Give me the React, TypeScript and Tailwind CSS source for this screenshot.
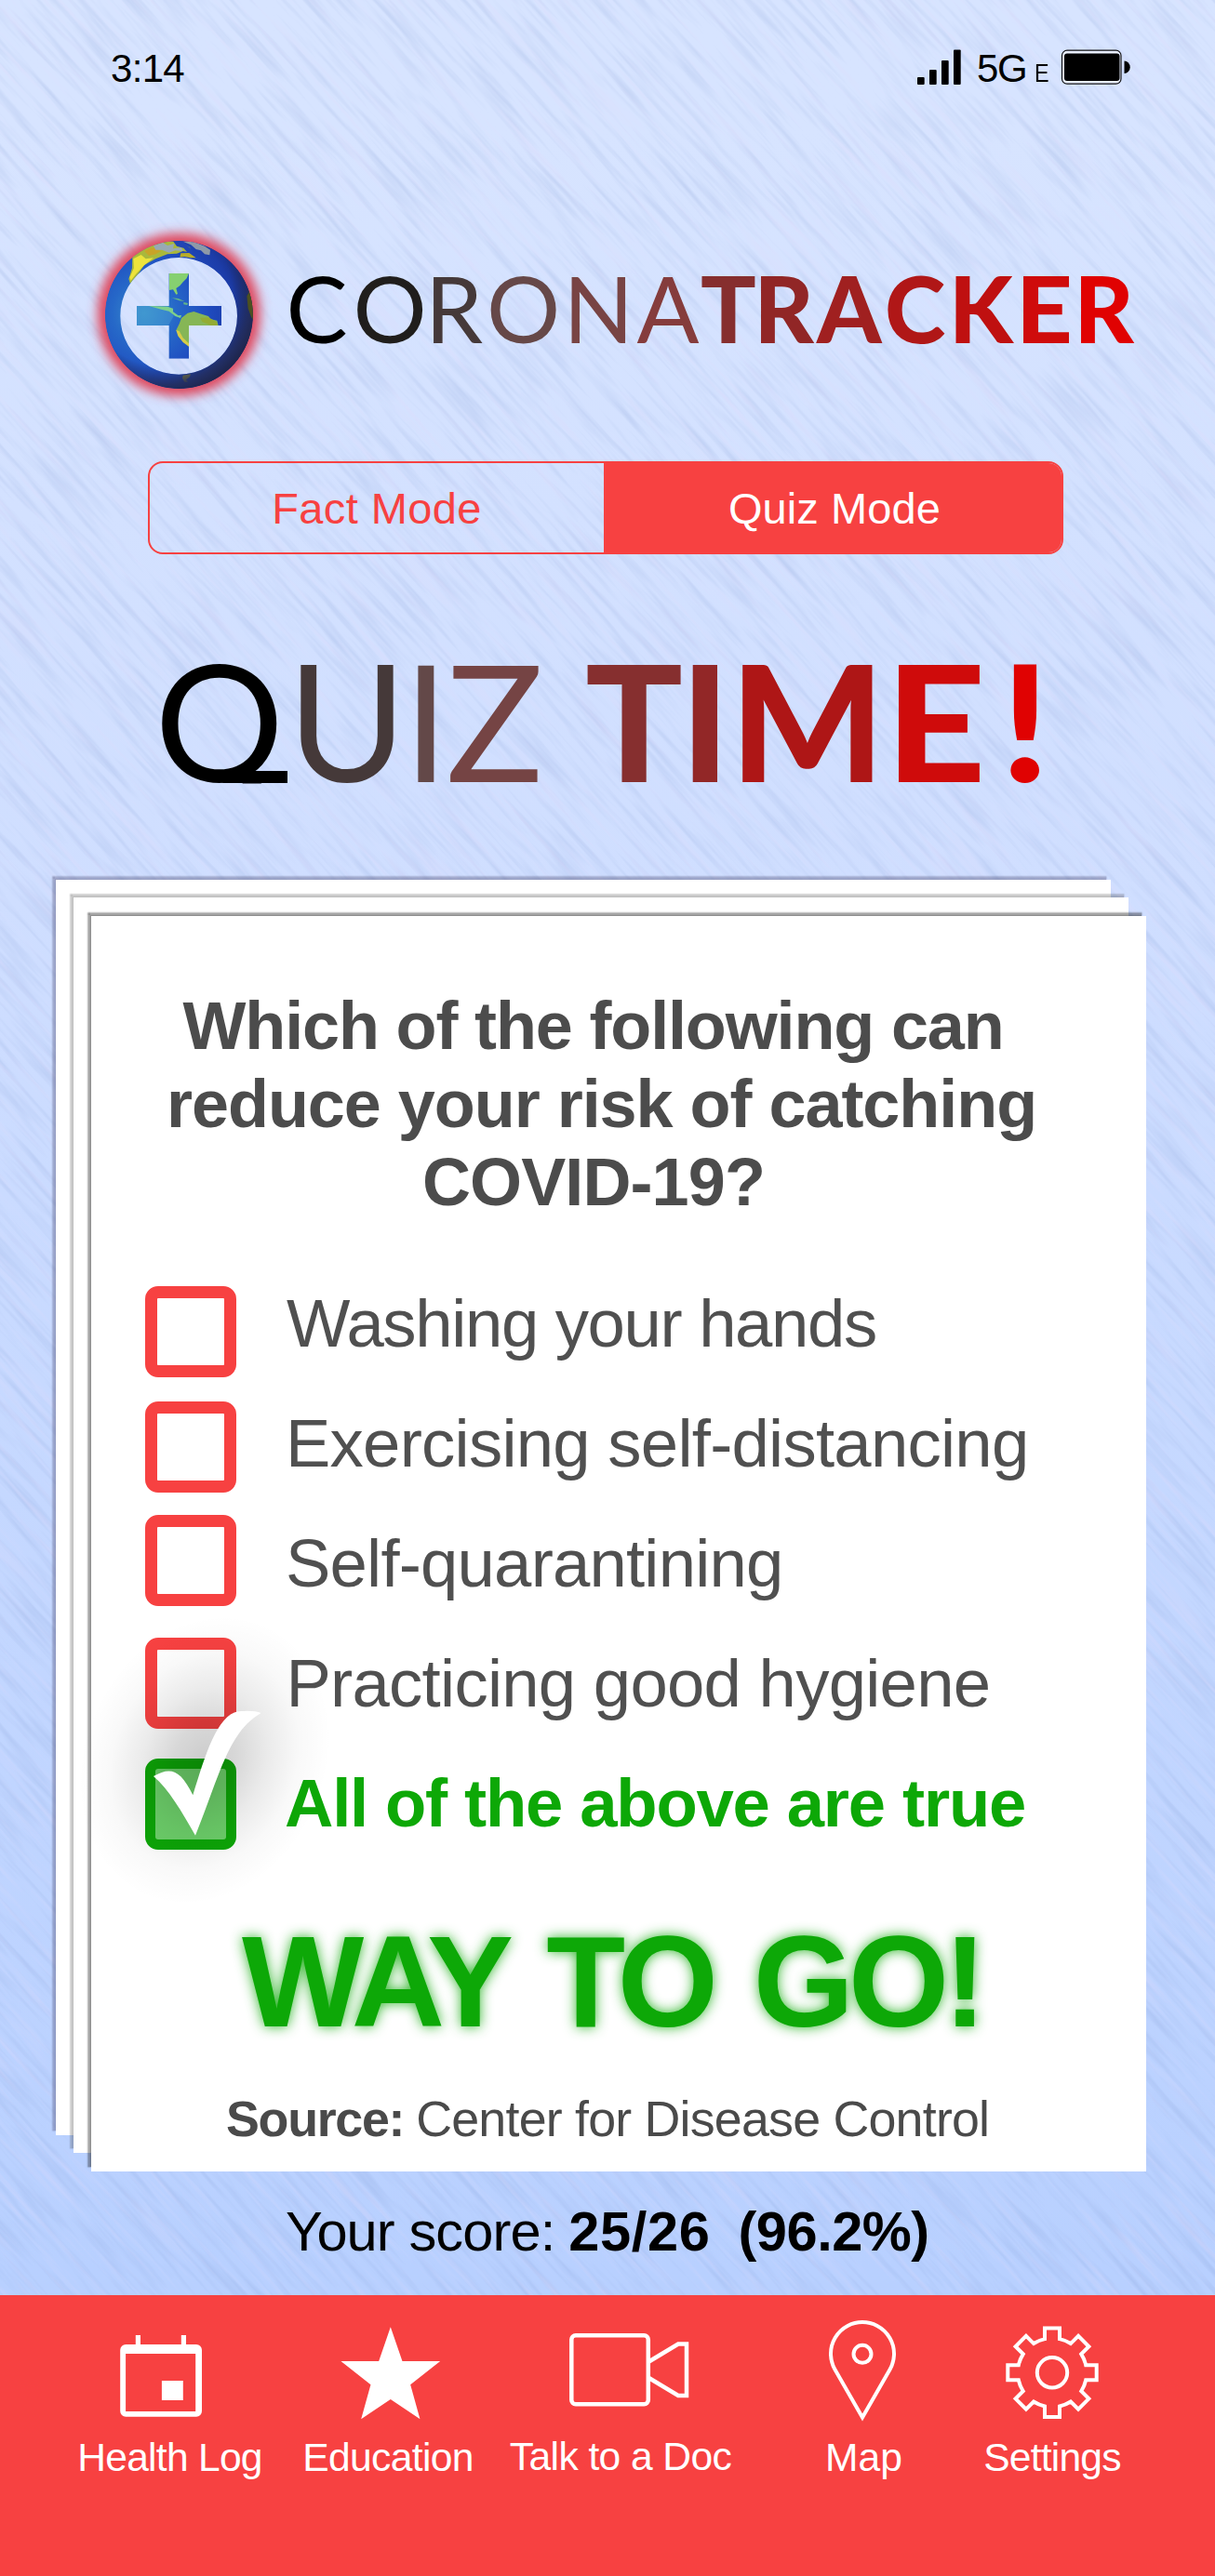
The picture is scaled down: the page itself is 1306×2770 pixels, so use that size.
import React from "react";

type Letter = { ch: string; cls: string };

const BRAND: Letter[] = [
  { ch: "C", cls: "w-[72px] text-[#000000]" },
  { ch: "O", cls: "w-[77.5px] text-[#201e1c]" },
  { ch: "R", cls: "w-[66px] text-[#453939]" },
  { ch: "O", cls: "w-[82.5px] text-[#664848]" },
  { ch: "N", cls: "w-[79px] text-[#784444]" },
  { ch: "A", cls: "w-[68.5px] text-[#853c3c]" },
  { ch: "T", cls: "w-[57.5px] font-black text-[#862e2e]" },
  { ch: "R", cls: "w-[67.5px] font-black text-[#912626]" },
  { ch: "A", cls: "w-[73px] font-black text-[#a02020]" },
  { ch: "C", cls: "w-[69px] font-black text-[#b01717]" },
  { ch: "K", cls: "w-[73.5px] font-black text-[#bf1010]" },
  { ch: "E", cls: "w-[61px] origin-[30px] scale-x-[1.07] font-black text-[#cf0b0b]" },
  { ch: "R", cls: "w-[65px] font-black text-[#e00202]" },
];

const TITLE: Letter[] = [
  { ch: "U", cls: "w-[124.5px] text-[#453939]" },
  { ch: "I", cls: "w-[46px] text-[#634848]" },
  { ch: "Z", cls: "w-[149.5px] text-[#754444]" },
  { ch: "T", cls: "w-[102.5px] font-black text-[#862f2f]" },
  { ch: "I", cls: "w-[53.5px] font-black text-[#922727]" },
  { ch: "M", cls: "w-[170.5px] font-black text-[#ae1616]" },
  { ch: "E", cls: "w-[121px] origin-[53px] scale-x-[1.08] font-black text-[#cf0b0b]" },
  { ch: "!", cls: "w-[50px] origin-[24px] scale-x-[1.08] font-black text-[#e00202]" },
];

const OPTIONS = [
  { label: "Washing your hands", box: "mt-[25px]", text: "ml-[54px] tracking-[-1.35px]" },
  { label: "Exercising self-distancing", box: "mt-[20px]", text: "ml-[53px] tracking-[-0.75px]" },
  { label: "Self-quarantining", box: "mt-[13px]", text: "ml-[53px] tracking-[-0.8px]" },
  { label: "Practicing good hygiene", box: "mt-[16px]", text: "ml-[53.5px] tracking-[-0.74px]" },
];

function Texture() {
  return (
    <div className="pointer-events-none absolute inset-0 overflow-hidden">
      <svg className="absolute -left-[1000px] -top-[250px] h-[3300px] w-[3300px] rotate-[48deg]" aria-hidden="true">
        <filter id="grainDark" x="0" y="0" width="100%" height="100%" colorInterpolationFilters="sRGB">
          <feTurbulence type="fractalNoise" baseFrequency="0.009 0.14" numOctaves={3} seed={4} />
          <feColorMatrix values="0 0 0 0 0.5  0 0 0 0 0.6  0 0 0 0 0.82  0.5 0 0 0 -0.23" />
        </filter>
        <filter id="grainPink" x="0" y="0" width="100%" height="100%" colorInterpolationFilters="sRGB">
          <feTurbulence type="fractalNoise" baseFrequency="0.008 0.15" numOctaves={3} seed={19} />
          <feColorMatrix values="0 0 0 0 0.88  0 0 0 0 0.85  0 0 0 0 0.98  0 0.8 0 0 -0.42" />
        </filter>
        <rect width="3300" height="3300" filter="url(#grainDark)" />
        <rect width="3300" height="3300" filter="url(#grainPink)" />
      </svg>
    </div>
  );
}

function Globe() {
  return (
    <svg className="h-[230px] w-[220px] shrink-0 overflow-visible" viewBox="0 0 660 690" aria-hidden="true">
      <defs>
        <radialGradient id="sea" gradientUnits="userSpaceOnUse" cx="225" cy="350" r="370">
          <stop offset="0" stopColor="#3a92cc" />
          <stop offset="0.28" stopColor="#2668c8" />
          <stop offset="0.55" stopColor="#1f4cc0" />
          <stop offset="0.78" stopColor="#1c3ca8" />
          <stop offset="1" stopColor="#16256a" />
        </radialGradient>
        <radialGradient id="shade" gradientUnits="userSpaceOnUse" cx="280" cy="290" r="340">
          <stop offset="0.68" stopColor="#232c58" stopOpacity="0" />
          <stop offset="0.86" stopColor="#232c58" stopOpacity="0.85" />
          <stop offset="1" stopColor="#1c2140" />
        </radialGradient>
        <filter id="halo" x="-30%" y="-30%" width="160%" height="160%">
          <feGaussianBlur stdDeviation="17" />
        </filter>
        <clipPath id="ring">
          <path clipRule="evenodd" d="M337 117a238.5 238.5 0 1 0 .1 0zM336.500 171a188.500 188.500 0 1 1-.1 0z" />
        </clipPath>
        <clipPath id="cross">
          <path d="M305 222h64v105h105v63H369v107h-64V390H201v-63h104z" />
        </clipPath>
        <mask id="hole" maskUnits="userSpaceOnUse" x="-60" y="-60" width="800" height="800">
          <rect x="-60" y="-60" width="800" height="800" fill="#fff" />
          <circle cx="337" cy="359" r="200" fill="#000" />
        </mask>
      </defs>
      <g mask="url(#hole)">
        <circle cx="337" cy="355" r="263" fill="#df4a5e" filter="url(#halo)" />
      </g>
      <g clipPath="url(#ring)">
        <circle cx="337.500" cy="355.500" r="239" fill="url(#sea)" />
        <path d="M187 165L225 140L262 128L300 118L345 122L372 138L380 156L350 150L330 158L300 160L262 175L225 195L205 225L180 255L175 240L186 205Z" fill="#a9b83c" />
        <path d="M190 175L215 162L230 175L255 172L225 196L200 222L182 245L178 235L192 205Z" fill="#ece33c" />
        <path d="M225 150L250 138L280 150L262 160L240 165Z" fill="#c8a428" />
        <path d="M255 133L285 122L300 132L322 126L318 142L345 138L350 150L325 148L305 155L282 146L262 146Z" fill="#98a9b4" />
        <path d="M318 118L350 119L378 145L384 158L366 156L352 140L330 134Z" fill="#2145b4" />
        <path d="M343 157L370 156L392 172L375 172L355 168L340 170Z" fill="#b8ac28" />
        <path d="M350 119L385 120L420 134L438 146L436 163L420 160L408 148L392 144L376 130Z" fill="#8d99a8" />
        <path d="M350 551L375 547L372 556L360 565L366 572L355 572L348 560Z" fill="#9c9430" />
        <circle cx="337.500" cy="355.500" r="239" fill="url(#shade)" />
        <path d="M566 260L580 270V380L570 362L560 335L556 295L562 285Z" fill="#4c5020" />
      </g>
      <g clipPath="url(#cross)">
        <rect x="195" y="215" width="285" height="290" fill="url(#sea)" />
        <path d="M195 320H300L320 360L300 395H195Z" fill="#4aa0d4" fillOpacity="0.45" />
        <path d="M305 222H369L362 238L350 250L340 262L328 270L333 288L328 290L318 274L305 276Z" fill="#86d070" />
        <path d="M314 301L335 303L355 312L338 310ZM352 315L366 318L364 324L352 322Z" fill="#62b488" />
        <path d="M240 327L300 329L318 335L318 346L335 358L345 357L342 366L325 360L305 344L280 338Z" fill="#7ed08c" />
        <path d="M345 366L365 350L385 345L405 352L432 360L440 370L460 374L464 390L369 390V456L352 440L335 418L328 405L338 385Z" fill="#86b656" />
        <path d="M328 405L338 408L350 430L369 448V458L350 444L334 424Z" fill="#d6cc48" />
        <path d="M405 365L432 364L458 378L462 390H440L412 378Z" fill="#93ac34" />
      </g>
    </svg>
  );
}

function Gear() {
  const pts: string[] = [];
  for (let i = 0; i < 8; i++) {
    const t = (i * Math.PI) / 4;
    const at = (x: number, y: number) =>
      `${(65 + x * Math.cos(t) - y * Math.sin(t)).toFixed(2)} ${(61.3 + x * Math.sin(t) + y * Math.cos(t)).toFixed(2)}`;
    pts.push(`${i === 0 ? "M" : "A37 37 0 0 1 "}${at(-8, -36.2)}L${at(-8, -47.700)}L${at(8, -47.700)}L${at(8, -36.2)}`);
  }
  return (
    <svg className="h-[120px] w-[130px]" viewBox="0 0 130 120" fill="none" stroke="white" strokeWidth="4">
      <path d={`${pts.join("")}A37 37 0 0 1 57 25.1Z`} />
      <circle cx="65" cy="61.3" r="16.2" />
    </svg>
  );
}

function NavItem({ label, cell, text, children }: { label: string; cell: string; text: string; children: React.ReactNode }) {
  return (
    <a className={`flex flex-col items-center ${cell}`}>
      {children}
      <span className={`mt-[7px] whitespace-nowrap text-[42.6px] leading-[50px] ${text}`}>{label}</span>
    </a>
  );
}

export default function App() {
  return (
    <div className="relative flex h-[2770px] w-[1306px] flex-col overflow-hidden bg-linear-to-b from-[#d7e4ff] from-5% via-[#cfdeff] via-35% to-[#b8d0ff] to-88% font-['Liberation_Sans',sans-serif] text-black">
      <Texture />

      <header className="relative flex h-[220px] shrink-0 items-start pl-[119px] pt-[44px]">
        <span className="w-[867px] text-[42px] leading-[60px] tracking-[-0.7px]">3:14</span>
        <svg className="mt-[9px] h-[39px] w-[47px]" viewBox="0 0 47 39">
          <rect x="0" y="30" width="7.7" height="8" rx="1" />
          <rect x="13" y="22" width="7.700" height="16" rx="1" />
          <rect x="26" y="12" width="7.700" height="26" rx="1" />
          <rect x="39" y="0.500" width="7.700" height="37.500" rx="1" />
        </svg>
        <span className="ml-[17px] text-[42px] leading-[60px] tracking-[-1.36px]">5G</span>
        <span className="ml-[9px] mt-[5px] w-[30px] origin-left scale-x-[0.85] text-[27.5px] leading-[60px]">E</span>
        <svg className="-ml-[3.5px] mt-[9px] h-[39px] w-[76px]" viewBox="0 0 76 39">
          <rect x="2.500" y="1.200" width="63.5" height="36" rx="5.500" fill="#e8eeff" stroke="#111" strokeWidth="1.2" />
          <rect x="5" y="4.500" width="59.500" height="29.500" rx="3" />
          <path d="M69.500 12.500a6 6.500 0 0 1 0 13.500z" />
        </svg>
      </header>

      <section className="relative flex h-[230px] shrink-0 items-start pl-[80px]">
        <Globe />
        <h1 className="ml-[7.5px] mt-[61px] flex font-['Lato',sans-serif] text-[99px] leading-[100px]">
          {BRAND.map((l, i) => (
            <span key={i} className={`shrink-0 ${l.cls}`}>{l.ch}</span>
          ))}
        </h1>
      </section>

      <div className="relative ml-[159px] mt-[46px] flex h-[100px] w-[984px] shrink-0 overflow-hidden rounded-[16px] border-2 border-[#f74141] text-[47px] leading-[98px]">
        <button className="w-[488px] tracking-[0.4px] text-[#f74141]">Fact Mode</button>
        <button className="flex-1 bg-[#f74141] pl-[4px] tracking-[0.1px] text-white">Quiz Mode</button>
      </div>

      <h2 className="relative ml-[166px] mt-[91px] flex h-[174px] shrink-0 font-['Lato',sans-serif] text-[174px] leading-[174px]">
        <span className="relative w-[143px] shrink-0">
          <span className="block [clip-path:inset(0_0_18.5px_0)]">Q</span>
          <span className="absolute left-[72px] top-[142px] h-[13px] w-[71px] bg-black [clip-path:polygon(34px_0,100%_0,100%_100%,0_100%)]" />
        </span>
        {TITLE.map((l, i) => (
          <span key={i} className={`shrink-0 ${l.cls}`}>{l.ch}</span>
        ))}
      </h2>

      <main className="relative ml-[60px] mt-[85px] h-[1390px] w-[1172px] shrink-0">
        <div className="absolute left-0 top-0 h-[1350px] w-[1134px] bg-white shadow-[-4.5px_-4.5px_1.5px_0px_rgba(80,80,120,0.45)]" />
        <div className="absolute left-[19px] top-[19px] h-[1350px] w-[1134px] bg-white shadow-[-4.5px_-4.5px_1.5px_0px_rgba(40,40,40,0.3)]" />
        <div className="relative left-[38px] top-[39px] flex h-[1350px] w-[1134px] flex-col bg-white shadow-[-4.5px_-4.5px_1.5px_0px_rgba(20,20,20,0.48)]">
          <div className="mt-[76px] flex flex-col whitespace-nowrap text-[72px] font-bold leading-[84px] text-[#4c4c4c]">
            <span className="pl-[98.5px] tracking-[-1.15px]">Which of the following can</span>
            <span className="pl-[81px] tracking-[-1.04px]">reduce your risk of catching</span>
            <span className="pl-[356px] tracking-[-0.9px]">COVID-19?</span>
          </div>

          <ul className="mt-[45px] flex flex-col pl-[58px] text-[72.5px] leading-[129px] text-[#505050]">
            {OPTIONS.map((o) => (
              <li key={o.label} className="flex h-[129px] items-start whitespace-nowrap">
                <span className={`size-[98px] shrink-0 rounded-[14px] border-[13px] border-[#f74141] ${o.box}`} />
                <span className={o.text}>{o.label}</span>
              </li>
            ))}
            <li className="relative flex h-[129px] items-start whitespace-nowrap">
              <span className="mt-[17px] size-[98px] shrink-0 rounded-[14px] border-[11px] border-[#0da807] bg-[#6fd36c]" />
              <span className="ml-[52px] font-bold tracking-[-1.19px] text-[#0da807]">All of the above are true</span>
              <svg className="absolute -left-[36px] -top-[153.500px] h-[320px] w-[240px] overflow-visible" viewBox="0 0 720 960">
                <defs>
                  <radialGradient id="checkShade">
                    <stop offset="0" stopColor="#000" stopOpacity="0.2" />
                    <stop offset="0.25" stopColor="#000" stopOpacity="0.155" />
                    <stop offset="0.5" stopColor="#000" stopOpacity="0.08" />
                    <stop offset="0.75" stopColor="#000" stopOpacity="0.025" />
                    <stop offset="1" stopColor="#000" stopOpacity="0" />
                  </radialGradient>
                </defs>
                <ellipse cx="300" cy="515" rx="390" ry="480" fill="url(#checkShade)" transform="rotate(24 300 515)" />
                <path d="M135 567C190 535 222 545 262 628C305 490 345 350 425 357Q460 355 482 363C375 425 350 560 270 758C225 680 185 610 135 567Z" fill="white" />
              </svg>
            </li>
          </ul>

          <p className="mt-[58px] whitespace-nowrap pl-[162px] text-[139px] font-bold leading-[139px] tracking-[-5.9px] text-[#0da807] [text-shadow:0_0_14px_rgba(13,168,7,0.85)] [word-spacing:11px]">
            WAY TO GO!
          </p>
          <p className="mt-[48px] flex gap-[13px] whitespace-nowrap pl-[145px] text-[53.8px] leading-[60px] text-[#4a4a4a]">
            <b className="tracking-[-1.3px]">Source:</b>
            <span className="tracking-[-0.8px]">Center for Disease Control</span>
          </p>
        </div>
      </main>

      <p className="relative mt-[28.5px] flex h-[103.5px] shrink-0 whitespace-nowrap pl-[307px] text-[59.6px] leading-[70px]">
        <span className="tracking-[-0.9px]">Your score:</span>
        <b className="ml-[15px] tracking-[0.6px]">25/26</b>
        <b className="ml-[30px] tracking-[-0.5px]">(96.2%)</b>
      </p>

      <nav className="relative flex flex-1 items-start bg-[#f74141] pl-[72.5px] pt-[22px] text-white">
        <NavItem label="Health Log" cell="w-[220px]" text="tracking-[-0.75px]">
          <svg className="-ml-[20px] h-[120px] w-[130px]" viewBox="0 0 130 120" fill="white">
            <path fillRule="evenodd" d="M27.200 31h75.800a6 6 0 0 1 6 6v65.700a6 6 0 0 1-6 6H27.200a6 6 0 0 1-6-6V37a6 6 0 0 1 6-6zM27.100 41v62h75.100V41z" />
            <path d="M37.800 21H43v11h-5.200zM86.800 21H92v11h-5.200zM65.900 70h22.900v21H65.900z" />
          </svg>
        </NavItem>
        <NavItem label="Education" cell="ml-[24.500px] w-[200px]" text="tracking-[-0.65px]">
          <svg className="ml-[5px] h-[120px] w-[130px]" viewBox="0 0 130 120" fill="white">
            <path transform="translate(-295 -30) scale(.3954 .3333)" d="M910 127L942 237H1045L964 313L990 424L910 360L830 424L856 313L775 237H878Z" />
          </svg>
        </NavItem>
        <NavItem label="Talk to a Doc" cell="ml-[25px] w-[250px] [&>span]:-translate-y-px" text="tracking-[-0.6px]">
          <svg className="ml-[18px] h-[120px] w-[130px]" viewBox="0 0 130 120" fill="none" stroke="white" strokeWidth="4.500">
            <rect x="3.300" y="21.200" width="82.500" height="74" rx="4.500" />
            <path d="M86.500 49.500L118 30.500H127V86H118L86.500 67" />
          </svg>
        </NavItem>
        <NavItem label="Map" cell="ml-[86.500px] w-[100px]" text="">
          <svg className="-ml-[3px] h-[120px] w-[130px]" viewBox="0 0 130 120" fill="none" stroke="white" strokeWidth="4">
            <path d="M65 109.500L35.500 58A34 34 0 1 1 94.500 58Z" />
            <circle cx="65" cy="41.300" r="9.500" />
          </svg>
        </NavItem>
        <NavItem label="Settings" cell="ml-[72.500px] w-[160px]" text="tracking-[-0.8px]">
          <Gear />
        </NavItem>
      </nav>
    </div>
  );
}
